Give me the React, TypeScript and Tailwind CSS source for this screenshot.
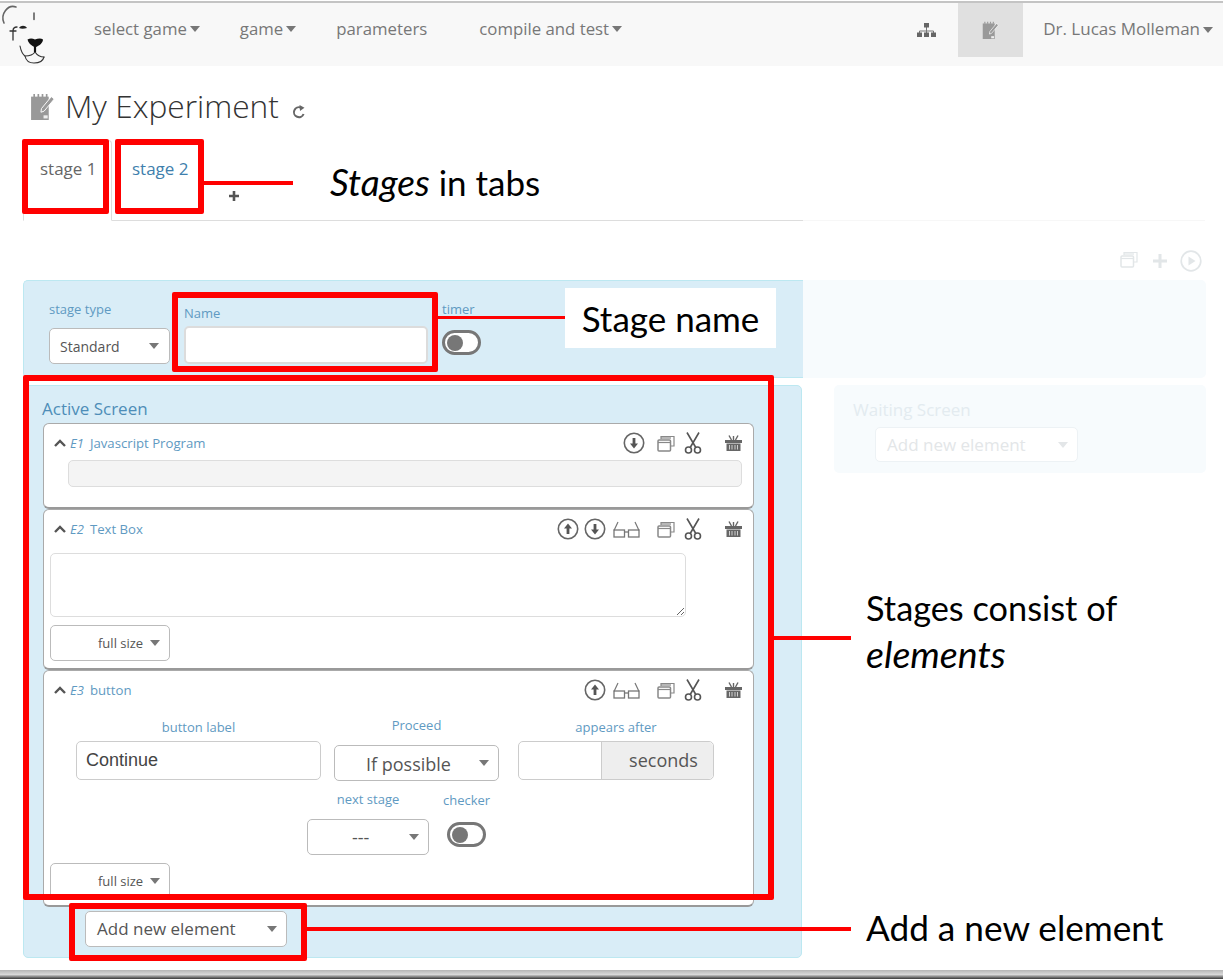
import { ReactNode } from "react";

const label = "text-[13px] leading-[18px] text-[#5f9ac2]";

function Caret({ className = "" }: { className?: string }) {
  return (
    <svg width="10" height="6" viewBox="0 0 10 6" className={className}>
      <path d="M0 0h10L5 6z" fill="currentColor" />
    </svg>
  );
}

function Select({ text, className, textClass = "" }: { text: string; className: string; textClass?: string }) {
  return (
    <div className={`flex items-center rounded-[5px] border border-[#bbb] bg-white text-[#555] ${className}`}>
      <span className={textClass}>{text}</span>
      <Caret className="ml-auto text-[#777]" />
    </div>
  );
}

function Toggle() {
  return (
    <div className="flex h-[25px] w-[39px] items-center rounded-full border-[3px] border-[#777] bg-white pl-[2px]">
      <div className="h-[16px] w-[16px] rounded-full bg-[#777]" />
    </div>
  );
}

function NotesIcon({ size, color = "#999" }: { size: number; color?: string }) {
  return (
    <svg width={size} height={size * 1.08} viewBox="0 0 24 26">
      <path d="M1 3.5h17v22.5H1z" fill={color} />
      <path d="M4 1v3M8 1v3M12 1v3M16 1v3" stroke={color} strokeWidth="1.6" />
      <path d="M11 15 20.5 3.5l2.8 2.3L13.5 17.5l-3 1z" fill={color} stroke="#fff" strokeWidth="0.9" />
      <rect x="13" y="21.5" width="4" height="3" fill="#eee" />
    </svg>
  );
}

function ArrowCircle({ up = false }: { up?: boolean }) {
  return (
    <svg width="22" height="22" viewBox="0 0 22 22" className="shrink-0">
      <circle cx="11" cy="11" r="9.7" fill="none" stroke="#666" strokeWidth="1.6" />
      <path
        d={up ? "M11 5.5 15 10.5h-2.6V16H9.6v-5.5H7z" : "M11 16.5 15 11.5h-2.6V6H9.6v5.5H7z"}
        fill="#555"
      />
    </svg>
  );
}

function CopyIcon({ color = "#888" }: { color?: string }) {
  return (
    <svg width="18" height="17" viewBox="0 0 18 17" className="shrink-0">
      <path d="M4 4V1.5h13V11h-3" fill="none" stroke={color} strokeWidth="1.2" />
      <path d="M4 3h10" stroke={color} strokeWidth="1.2" />
      <rect x="1" y="5" width="12.5" height="11" rx="1" fill="none" stroke={color} strokeWidth="1.5" />
      <path d="M1 7.5h12.5" stroke={color} strokeWidth="1.2" />
    </svg>
  );
}

function ScissorsIcon() {
  return (
    <svg width="18" height="22" viewBox="0 0 18 22" className="shrink-0">
      <path d="M15 0.5 6.2 15.5M3 0.5l8.8 15" stroke="#555" strokeWidth="1.6" fill="none" />
      <circle cx="4.5" cy="18" r="3" fill="none" stroke="#555" strokeWidth="1.6" />
      <circle cx="13.5" cy="18" r="3" fill="none" stroke="#555" strokeWidth="1.6" />
    </svg>
  );
}

function BasketIcon() {
  return (
    <svg width="17" height="16" viewBox="0 0 17 16" className="shrink-0">
      <path d="M4 0.5 6.5 5M13 0.5 10.5 5M8.5 1v4" stroke="#666" strokeWidth="1.4" />
      <path d="M0 5h17v3H0z" fill="#666" />
      <path d="M1.5 8.5h14V16h-14z" fill="#666" />
      <path d="M4.5 10v4.5M7 10v4.5M10 10v4.5M12.5 10v4.5" stroke="#ddd" strokeWidth="0.9" />
    </svg>
  );
}

function GlassesIcon() {
  return (
    <svg width="27" height="17" viewBox="0 0 27 17" className="shrink-0">
      <path d="M1 9.5 5 1M26 9.5 22 1" stroke="#777" strokeWidth="1.2" fill="none" />
      <rect x="1" y="9" width="10.5" height="7" fill="none" stroke="#777" strokeWidth="1.3" />
      <rect x="15.5" y="9" width="10.5" height="7" fill="none" stroke="#777" strokeWidth="1.3" />
      <path d="M11.5 11h4" stroke="#777" strokeWidth="1.3" />
    </svg>
  );
}

function ElementHeader({ tag, name, children }: { tag: string; name: string; children: ReactNode }) {
  return (
    <div className="flex h-[36px] items-center pl-[10px] pr-[11px] pt-[2px]">
      <svg width="12" height="8" viewBox="0 0 12 8" className="shrink-0">
        <path d="M1 7 6 2l5 5" fill="none" stroke="#555" strokeWidth="2.4" />
      </svg>
      <i className="ml-[4px] mt-[2px] text-[13px] text-[#5f9ac2]">{tag}</i>
      <span className="ml-[6px] mt-[2px] text-[13.2px] text-[#5f9ac2]">{name}</span>
      <div className="ml-auto flex items-center">{children}</div>
    </div>
  );
}

function Logo() {
  return (
    <svg width="48" height="63" viewBox="0 0 48 63" className="shrink-0">
      <g fill="none" stroke="#333" strokeLinecap="round">
        <path d="M4 20C0 11 8 1 16 4" stroke="#666" strokeWidth="1.6" />
        <path d="M34 10v6.5" stroke="#555" strokeWidth="1.5" />
        <path d="M17 24c-3 0-4 1-4 4v9M10 28h6" strokeWidth="1.3" />
        <path d="M20 43c1 5 2 8 5 10 1 5 4 7 9 7 5 0 9-2 10-6" strokeWidth="1.1" />
        <path d="M25 53c4 0 8-1 10-4 2 3 5 5 9 5" strokeWidth="1.2" />
      </g>
      <path d="M19 25c2-3 6-3 8 0-3 1-6 1-8 0z" fill="#222" />
      <path d="M27.5 36.5c3-1.5 5-1 7.5 0 3-1 6-1.5 8 0 0 3-3 6-8 8-4-2-7-5-7.5-8z" fill="#111" />
      <path d="M35 44v5" stroke="#111" strokeWidth="2.2" />
    </svg>
  );
}

function RedBox({ className }: { className: string }) {
  return <div className={`absolute rounded-[2px] border-[6px] border-[#ff0000] ${className}`} />;
}

export default function App() {
  return (
    <div className="relative h-[979px] w-[1223px] overflow-hidden bg-white font-['Open_Sans',sans-serif] text-[#555]">
      <div className="h-[3px] border-b-2 border-[#c4c4c4]" />
      <nav className="flex h-[63px] bg-[#f8f8f8] text-[16.8px] text-[#777]">
        <Logo />
        <div className="ml-[46px] flex h-[52px] items-center">
          <span>select game</span>
          <Caret className="ml-[3px]" />
        </div>
        <div className="ml-[40px] flex h-[52px] items-center">
          <span>game</span>
          <Caret className="ml-[3px]" />
        </div>
        <div className="ml-[40px] flex h-[52px] items-center">parameters</div>
        <div className="ml-[52px] flex h-[52px] items-center">
          <span>compile and test</span>
          <Caret className="ml-[3px]" />
        </div>
        <div className="ml-auto flex h-[54px] items-center pr-[10px]">
          <svg width="19" height="14" viewBox="0 0 19 14" className="mr-[22px]">
            <path d="M9.5 4v4M2.5 10V8h14v2M9.5 8v2" stroke="#777" strokeWidth="1" fill="none" />
            <rect x="7" y="0" width="5" height="4.5" fill="#666" />
            <rect x="0" y="9.5" width="5" height="4.5" fill="#666" />
            <rect x="7" y="9.5" width="5" height="4.5" fill="#666" />
            <rect x="14" y="9.5" width="5" height="4.5" fill="#666" />
          </svg>
          <div className="flex h-[54px] w-[65px] items-center justify-center bg-[#e0e0e0]">
            <NotesIcon size={17} />
          </div>
          <span className="mb-[2px] ml-[20px] text-[17px]">Dr. Lucas Molleman</span>
          <Caret className="ml-[3px]" />
        </div>
      </nav>

      <div className="ml-[30px] mt-[22px] flex h-[36px] items-center">
        <NotesIcon size={25} />
        <h1 className="ml-[10px] text-[31.7px] font-light leading-[36px] text-[#333]">My Experiment</h1>
        <svg width="14" height="14" viewBox="0 0 14 14" className="ml-[13px] mt-[12px]">
          <path d="M11.6 9A5 5 0 1 1 8.8 2.5" fill="none" stroke="#666" strokeWidth="2" />
          <path d="M7.5 0 12.5 2.8 8 6z" fill="#666" />
        </svg>
      </div>

      {/* tabs */}
      <div className="ml-[23px] mt-[16px] flex h-[81px]">
        <div className="flex w-[780px] items-start border-b border-[#ddd]">
          <div className="h-[81px] w-[89px] rounded-t-[4px] border border-b-white border-[#ddd] bg-white pl-[16px] pt-[17px] text-[17px] leading-[22px] text-[#666]">
            stage 1
          </div>
          <div className="w-[96px] pl-[20px] pt-[18px] text-[17px] leading-[22px] text-[#3f7fad]">stage 2</div>
          <svg width="10" height="10" viewBox="0 0 10 10" className="ml-[21px] mt-[51px]">
            <path d="M5 0v10M0 5h10" stroke="#555" strokeWidth="2.6" />
          </svg>
        </div>
        <div className="w-[402px] border-b border-[#f7f7f7]" />
      </div>

      <div className="flex h-[59px] items-start justify-end pr-[21px] pt-[30px]">
        <CopyIcon color="#e2e6e8" />
        <svg width="14" height="14" viewBox="0 0 14 14" className="ml-[15px] mt-[3px]">
          <path d="M7 0v14M0 7h14" stroke="#e2e6e8" strokeWidth="3" />
        </svg>
        <svg width="22" height="22" viewBox="0 0 22 22" className="ml-[13px] -mt-[1px]">
          <circle cx="11" cy="11" r="9.8" fill="none" stroke="#e2e6e8" strokeWidth="1.7" />
          <path d="M8.5 6.5v9l7-4.5z" fill="#e2e6e8" />
        </svg>
      </div>

      {/* stage settings */}
      <div className="ml-[23px] flex h-[98px] w-[1183px]">
        <div className="flex w-[780px] items-start rounded-l-[5px] border-y border-l border-[#bce8f1] bg-[#d9edf7] pl-[25px]">
          <div className="w-[121px] pt-[19px]">
            <div className={label}>stage type</div>
            <Select
              text="Standard"
              className="mt-[10px] h-[36px] w-[121px] pl-[10px] pr-[10px] text-[14px]"
            />
          </div>
          <div className="ml-[14px] w-[244px] pt-[23px]">
            <div className={label}>Name</div>
            <div className="mt-[4px] h-[38px] rounded-[5px] border-2 border-[#dcdcdc] bg-white" />
          </div>
          <div className="ml-[14px] pt-[19px]">
            <div className={label}>timer</div>
            <div className="mt-[12px]">
              <Toggle />
            </div>
          </div>
        </div>
        <div className="w-[403px] rounded-r-[5px] bg-[#f7fbfd]" />
      </div>

      <div className="ml-[23px] mt-[7px] flex items-start">
        {/* active screen */}
        <div className="h-[573px] w-[779px] rounded-[5px] border border-[#bce8f1] bg-[#d9edf7] pl-[19px] pt-[14px]">
          <div className="-ml-[1px] -mt-[2px] mb-[2px] h-[23px] text-[17px] leading-[22px] text-[#4e8db8]">
            Active Screen
          </div>

          <div className="h-[86px] w-[711px] rounded-[6px] border border-b-2 border-[#aaa] border-b-[#999] bg-white">
            <ElementHeader tag="E1" name="Javascript Program">
              <ArrowCircle />
              <div className="ml-[12px]">
                <CopyIcon />
              </div>
              <div className="ml-[9px]">
                <ScissorsIcon />
              </div>
              <div className="ml-[23px]">
                <BasketIcon />
              </div>
            </ElementHeader>
            <div className="ml-[24px] h-[27px] w-[674px] rounded-[5px] border border-[#ddd] bg-[#f4f4f4]" />
          </div>

          <div className="h-[161px] w-[711px] rounded-[6px] border border-b-2 border-[#aaa] border-b-[#999] bg-white">
            <ElementHeader tag="E2" name="Text Box">
              <ArrowCircle up />
              <div className="ml-[5px]">
                <ArrowCircle />
              </div>
              <div className="ml-[7px]">
                <GlassesIcon />
              </div>
              <div className="ml-[17px]">
                <CopyIcon />
              </div>
              <div className="ml-[9px]">
                <ScissorsIcon />
              </div>
              <div className="ml-[23px]">
                <BasketIcon />
              </div>
            </ElementHeader>
            <textarea className="ml-[6px] mt-[7px] block h-[64px] w-[636px] rounded-[5px] border border-[#ddd] bg-white outline-none" />
            <Select
              text="full size"
              textClass="mt-[2px]"
              className="ml-[6px] mt-[8px] h-[36px] w-[120px] pl-[47px] pr-[9px] text-[13px]"
            />
          </div>

          <div className="h-[237px] w-[711px] rounded-[6px] border border-b-2 border-[#aaa] border-b-[#999] bg-white">
            <ElementHeader tag="E3" name="button">
              <ArrowCircle up />
              <div className="ml-[7px]">
                <GlassesIcon />
              </div>
              <div className="ml-[17px]">
                <CopyIcon />
              </div>
              <div className="ml-[9px]">
                <ScissorsIcon />
              </div>
              <div className="ml-[23px]">
                <BasketIcon />
              </div>
            </ElementHeader>
            <div className="ml-[32px] flex items-start">
              <div className="w-[245px] pt-[11px] text-center">
                <div className={label}>button label</div>
                <div className="mt-[5px] flex h-[39px] items-center rounded-[5px] border border-[#ccc] bg-white pl-[9px] text-left font-['Liberation_Sans',sans-serif] text-[18px] text-[#444]">
                  Continue
                </div>
              </div>
              <div className="ml-[13px] w-[165px] pt-[9px] text-center">
                <div className={label}>Proceed</div>
                <Select
                  text="If possible"
                  textClass="mt-[2px]"
                  className="mt-[11px] h-[36px] pl-[31px] pr-[9px] text-[18px]"
                />
              </div>
              <div className="ml-[19px] w-[196px] pt-[11px] text-center">
                <div className={label}>appears after</div>
                <div className="mt-[5px] flex h-[39px] rounded-[5px] border border-[#ccc] bg-white">
                  <div className="w-[82px]" />
                  <div className="flex flex-1 items-center justify-center rounded-r-[5px] border-l border-[#ccc] bg-[#eee] pl-[12px] text-[18px] text-[#555]">
                    seconds
                  </div>
                </div>
              </div>
            </div>
            <div className="ml-[263px] flex items-start">
              <div className="w-[122px] pt-[9px] text-center">
                <div className={label}>next stage</div>
                <div className="mt-[11px] flex h-[36px] items-center rounded-[5px] border border-[#bbb] bg-white pl-[44px] pr-[9px] text-[18px] text-[#555]">
                  <span>---</span>
                  <Caret className="ml-auto text-[#777]" />
                </div>
              </div>
              <div className="ml-[14px] pt-[10px]">
                <div className={label}>checker</div>
                <div className="ml-[4px] mt-[13px]">
                  <Toggle />
                </div>
              </div>
            </div>
            <Select
              text="full size"
              textClass="mt-[2px]"
              className="ml-[6px] mt-[8px] h-[36px] w-[120px] pl-[47px] pr-[9px] text-[13px]"
            />
          </div>

          <Select
            text="Add new element"
            className="ml-[42px] mt-[4px] h-[36px] w-[202px] pl-[11px] pr-[9px] text-[17px]"
          />
        </div>

        {/* waiting screen, greyed out */}
        <div className="ml-[32px] h-[88px] w-[372px] rounded-[5px] bg-[#f7fbfd] pl-[19px] pt-[14px]">
          <div className="text-[17px] leading-[22px] text-[#e3ebf0]">Waiting Screen</div>
          <div className="ml-[22px] mt-[6px] flex h-[35px] w-[203px] items-center rounded-[5px] border border-[#edf2f5] bg-white pl-[11px] pr-[9px] text-[17px] text-[#e3e6e8]">
            <span>Add new element</span>
            <Caret className="ml-auto text-[#e3e6e8]" />
          </div>
        </div>
      </div>

      <div className="mt-[12px] h-[9px] bg-gradient-to-b from-[#b5b5b5] via-[#d8d8d8] to-[#3a3a3a]" />

      {/* annotations drawn over the screenshot */}
      <div className="font-['Lato',sans-serif] text-[35px] leading-none text-black">
        <RedBox className="left-[22px] top-[139px] h-[75px] w-[87px]" />
        <RedBox className="left-[115px] top-[139px] h-[75px] w-[89px]" />
        <div className="absolute left-[203px] top-[181px] h-[4px] w-[90px] bg-[#ff0000]" />
        <div className="absolute left-[330px] top-[163px]">
          <i className="text-[37px]">Stages</i> in tabs
        </div>

        <RedBox className="left-[172px] top-[292px] h-[80px] w-[266px]" />
        <div className="absolute left-[438px] top-[316px] h-[3px] w-[127px] bg-[#ff0000]" />
        <div className="absolute left-[565px] top-[288px] flex h-[60px] w-[211px] items-center justify-center bg-white">
          Stage name
        </div>

        <RedBox className="left-[23px] top-[375px] h-[525px] w-[751px]" />
        <div className="absolute left-[773px] top-[636px] h-[4px] w-[78px] bg-[#ff0000]" />
        <div className="absolute left-[866px] top-[591px] text-[34.3px]">Stages consist of</div>
        <i className="absolute left-[866px] top-[635px] text-[37.5px]">elements</i>

        <RedBox className="left-[69px] top-[903px] h-[58px] w-[238px]" />
        <div className="absolute left-[307px] top-[927px] h-[4px] w-[544px] bg-[#ff0000]" />
        <div className="absolute left-[866px] top-[910px] text-[35.2px]">Add a new element</div>
      </div>
    </div>
  );
}
